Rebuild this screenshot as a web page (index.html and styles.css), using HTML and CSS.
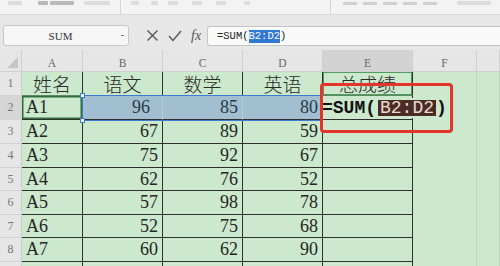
FILE: index.html
```html
<!DOCTYPE html>
<html>
<head>
<meta charset="utf-8">
<link rel="stylesheet" href="styles.css">
</head>
<body>
<div class="toolbar">
  <span class="tb w14 ml8"></span>
  <span class="tb dark w10 ml16"></span>
  <span class="tb dark w24 ml2"></span>
  <span class="tb w26 ml10"></span>
  <span class="tsep ml10"></span>
  <span class="tb w8 ml10"></span>
  <span class="tb w7 ml12"></span>
  <span class="tb w10 ml10"></span>
  <span class="tb w10 ml14"></span>
  <span class="tb w10 ml14"></span>
  <span class="tb w6 ml18"></span>
  <span class="tsep ml80"></span>
  <span class="tb hi w14 ml12"></span>
  <span class="tb hi w14 ml6"></span>
  <span class="tb hi w14 ml6"></span>
  <span class="tb hi w14 ml6"></span>
  <span class="tb hi w14 ml6"></span>
  <span class="tb w34 ml20"></span>
</div>
<div class="fbar">
  <div class="namebox"><span class="nb-text">SUM</span><span class="nb-arrow"></span></div>
  <div class="fbtns">
    <svg class="ico" width="13" height="13" viewBox="0 0 13 13"><path d="M1.5 1.5 L11.5 11.5 M11.5 1.5 L1.5 11.5" stroke="#555" stroke-width="1.4" fill="none"/></svg>
    <svg class="ico" width="14" height="12" viewBox="0 0 14 12"><path d="M1 6 L5 10.5 L13 1" stroke="#555" stroke-width="1.4" fill="none"/></svg>
    <span class="fx">fx</span>
  </div>
  <div class="finput"><span>=SUM(</span><span class="fhl">B2:D2</span><span>)</span></div>
</div>
<div class="sheet">
  <div class="h corner"><span class="tri"></span></div>
  <div class="h">A</div><div class="h">B</div><div class="h">C</div><div class="h">D</div><div class="h on">E</div><div class="h">F</div><div class="h"></div>

  <div class="r">1</div>
  <div class="c ctr">姓名</div><div class="c ctr">语文</div><div class="c ctr">数学</div><div class="c ctr">英语</div><div class="c ctr e1">总成绩</div><div class="f"></div><div class="f"></div>

  <div class="r on">2</div>
  <div class="c act">A1</div><div class="c num sel b2">96</div><div class="c num sel">85</div><div class="c num sel">80</div>
  <div class="c edit"><span class="ed">=SUM(<span class="edhl">B2:D2</span>)</span></div><div class="f"></div><div class="f"></div>

  <div class="r">3</div>
  <div class="c">A2</div><div class="c num">67</div><div class="c num">89</div><div class="c num">59</div><div class="c"></div><div class="f"></div><div class="f"></div>

  <div class="r">4</div>
  <div class="c">A3</div><div class="c num">75</div><div class="c num">92</div><div class="c num">67</div><div class="c"></div><div class="f"></div><div class="f"></div>

  <div class="r">5</div>
  <div class="c">A4</div><div class="c num">62</div><div class="c num">76</div><div class="c num">52</div><div class="c"></div><div class="f"></div><div class="f"></div>

  <div class="r">6</div>
  <div class="c">A5</div><div class="c num">57</div><div class="c num">98</div><div class="c num">78</div><div class="c"></div><div class="f"></div><div class="f"></div>

  <div class="r">7</div>
  <div class="c">A6</div><div class="c num">52</div><div class="c num">75</div><div class="c num">68</div><div class="c"></div><div class="f"></div><div class="f"></div>

  <div class="r">8</div>
  <div class="c">A7</div><div class="c num">60</div><div class="c num">62</div><div class="c num">90</div><div class="c"></div><div class="f"></div><div class="f"></div>

  <div class="r"></div>
  <div class="c"></div><div class="c"></div><div class="c"></div><div class="c"></div><div class="c"></div><div class="f"></div><div class="f"></div>

  <div class="selbox"><span class="hd hd-t"></span><span class="hd hd-b"></span></div>
  <div class="redbox"></div>
</div>
</body>
</html>
```
FILE: styles.css
```css
* { box-sizing: border-box; }
html, body { margin: 0; padding: 0; }
body {
  width: 500px;
  height: 266px;
  overflow: hidden;
  background: #e7e7e7;
  font-family: "Liberation Serif", "Noto Sans CJK SC", serif;
  color: #222;
}

/* top toolbar (mostly cut off) */
.toolbar {
  height: 15px;
  background: #f3f3f3;
  border-bottom: 1px solid #dadada;
  display: flex;
  align-items: flex-start;
}
.tb {
  display: block;
  height: 4px;
  margin-top: 1px;
  background: #dcdcdc;
  border-radius: 1px;
}
.tb.dark { background: #b9b9b9; }
.tb.hi { margin-top: 2px; height: 3px; background: #cfcfcf; }
.tsep { display: block; width: 1px; height: 14px; background: #d6d6d6; }
.w6 { width: 6px; } .w7 { width: 7px; } .w8 { width: 8px; } .w10 { width: 10px; }
.w14 { width: 14px; } .w24 { width: 24px; } .w26 { width: 26px; } .w34 { width: 34px; }
.ml2 { margin-left: 2px; } .ml6 { margin-left: 6px; } .ml8 { margin-left: 8px; }
.ml10 { margin-left: 10px; } .ml12 { margin-left: 12px; } .ml14 { margin-left: 14px; }
.ml16 { margin-left: 16px; } .ml18 { margin-left: 18px; } .ml20 { margin-left: 20px; }
.ml80 { margin-left: 80px; }

/* formula bar */
.fbar {
  height: 35px;
  display: flex;
  align-items: flex-start;
  padding: 10px 0 0 3px;
}
.namebox {
  width: 126px;
  height: 21px;
  background: #f6f6f6;
  border: 1px solid #c8c8c8;
  border-radius: 3px;
  display: flex;
  align-items: center;
  position: relative;
}
.nb-text {
  flex: 1;
  text-align: center;
  font-size: 11px;
  color: #333;
  padding-right: 4px;
}
.nb-arrow {
  width: 3px;
  height: 1px;
  background: #777;
  margin-right: 4px;
}
.fbtns {
  width: 78px;
  height: 21px;
  display: flex;
  align-items: center;
  padding-left: 17px;
  gap: 9px;
}
.ico { display: block; }
.fx {
  font-style: italic;
  font-size: 14px;
  color: #555;
  line-height: 14px;
}
.finput {
  flex: 1;
  height: 20px;
  margin-top: 1px;
  background: #f9f9f9;
  border: 1px solid #c6c6c6;
  border-right: none;
  border-radius: 3px 0 0 3px;
  display: flex;
  align-items: center;
  padding-left: 9px;
  font-family: "Liberation Mono", monospace;
  font-size: 10.5px;
  color: #222;
}
.fhl {
  background: #2f78d4;
  color: #fff;
  line-height: 13px;
}

/* sheet */
.sheet {
  position: relative;
  display: grid;
  grid-template-columns: 22px 61px 80px 80px 80px 90px 64px 23px;
  grid-template-rows: 22px 24px 24px 24px 24px 23px 24px 23px 24px 24px;
  background: #cce8cd;
}
.h {
  background: #e6e6e6;
  border-right: 1px solid #d0d0d0;
  border-bottom: 1px solid #cfcfcf;
  font-size: 11.5px;
  color: #666;
  display: flex;
  align-items: center;
  justify-content: center;
  padding-top: 4px;
}
.h.on { background: #d3d3d3; }
.corner { position: relative; }
.tri {
  position: absolute;
  right: 3px;
  bottom: 3px;
  width: 0;
  height: 0;
  border-left: 11px solid transparent;
  border-bottom: 11px solid #c6c6c6;
}
.r {
  background: #e6e6e6;
  border-right: 1px solid #cdcdcd;
  border-bottom: 1px solid #d2d2d2;
  font-size: 12px;
  color: #777;
  display: flex;
  align-items: center;
  justify-content: center;
}
.r.on { background: #d6d6d6; }
.c {
  border-right: 1px solid #2e2e2e;
  border-bottom: 1px solid #2e2e2e;
  display: flex;
  align-items: center;
  padding-left: 4px;
  font-size: 18px;
  color: #262626;
  white-space: nowrap;
}
.c.ctr {
  justify-content: center;
  padding-left: 0;
  font-family: "Noto Sans CJK SC", sans-serif;
  font-size: 19px;
  font-weight: 300;
  color: #2a2a2a;
  border-bottom-color: #5d8a62;
}
.c.num {
  justify-content: flex-end;
  padding-left: 0;
  padding-right: 4px;
}
.c.b2 { padding-right: 12px; }
.c.sel {
  background: #a2bfd2;
  border-right-color: #b6cbd8;
  color: #2a3a48;
}
.c.act { box-shadow: inset 0 0 0 1.5px #2f6f3c; }
.c.e1 { box-shadow: inset 0 0 0 1px #4f9a5d; }
.f {
  border-right: 1px solid #b9d6ba;
}

.c.edit {
  position: relative;
  z-index: 2;
  padding-left: 0;
  overflow: visible;
}
.ed {
  margin-left: -1px;
  font-family: "Liberation Mono", monospace;
  font-weight: 700;
  font-size: 18px;
  color: #111;
  background: #cce8cd;
  line-height: 20px;
  padding-right: 4px;
}
.edhl {
  background: #4a2c25;
  color: #e9dbd0;
  font-weight: 400;
  padding: 0 2px;
  margin-left: 2px;
  line-height: 16px;
  display: inline-block;
}

.selbox {
  position: absolute;
  left: 82px;
  top: 45px;
  width: 241px;
  height: 26px;
  border: 1.5px solid #3c7cd0;
  z-index: 1;
}
.hd {
  position: absolute;
  left: -3px;
  width: 5px;
  height: 5px;
  background: #fff;
  border: 1px solid #3c7cd0;
}
.hd-t { top: -3px; }
.hd-b { bottom: -3px; }

.redbox {
  position: absolute;
  left: 320px;
  top: 33px;
  width: 133px;
  height: 50px;
  border: 3px solid #e7342b;
  border-radius: 4px;
  z-index: 3;
}
```
